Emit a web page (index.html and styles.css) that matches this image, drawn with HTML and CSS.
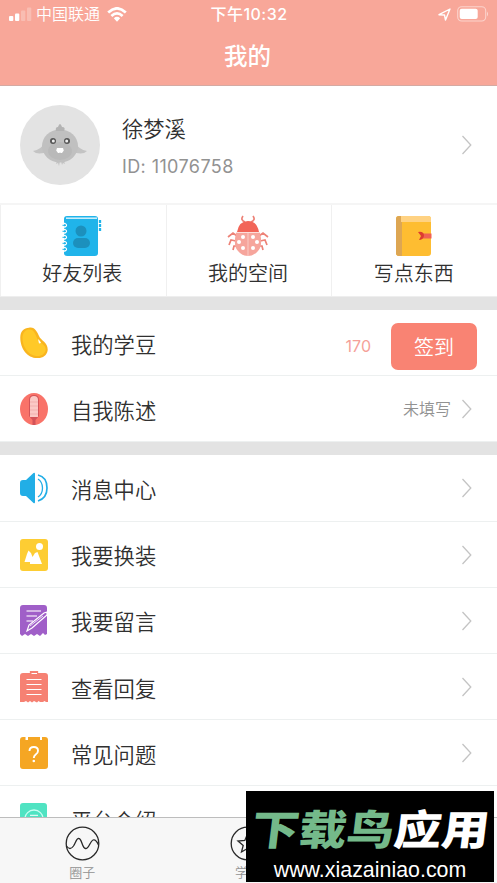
FILE: index.html
```html
<!DOCTYPE html>
<html lang="zh-CN">
<head>
<meta charset="utf-8">
<title>我的</title>
<link rel="stylesheet" href="styles.css">
</head>
<body>
<div class="app">
  <header class="header">
    <div class="status">
      <div class="carrier">
        <svg width="23" height="14" viewBox="0 0 23 14" fill="#fff"><rect x="0" y="9" width="4.300" height="5" rx="1"/><rect x="6" y="6.500" width="4.300" height="7.500" rx="1"/><g opacity=".25"><rect x="12" y="3.500" width="4.300" height="10.500" rx="1"/><rect x="18" y="0.500" width="4.300" height="13.500" rx="1"/></g></svg>
        <span class="carrier-name">中国联通</span>
        <svg width="20" height="15" viewBox="0 0 20 15" fill="none" stroke="#fff" stroke-width="2.700"><path d="M1.200 5.500Q10-2.800 18.800 5.500"/><path d="M4.400 9Q10 3.700 15.600 9"/><path d="M6.800 11.200Q10 8.300 13.200 11.200L10 14.700Z" fill="#fff" stroke="none"/></svg>
      </div>
      <span class="clock">下午10:32</span>
      <div class="power">
        <svg width="13" height="13" viewBox="0 0 13 13" fill="none" stroke="#fff" stroke-width="1.400" stroke-linejoin="round"><path d="M1 6.700L12 1L7.500 12L6.500 7Z"/></svg>
        <svg width="32" height="16" viewBox="0 0 32 16"><rect x=".7" y=".7" width="28" height="14.300" rx="4" fill="none" stroke="#fff" stroke-opacity=".5" stroke-width="1.100"/><rect x="2.700" y="2.700" width="18" height="10.300" rx="2" fill="#fff"/><path d="M30 5.500Q32 7.800 30 10.500Z" fill="#fff" opacity=".55"/></svg>
      </div>
    </div>
    <h1 class="title">我的</h1>
  </header>

  <main class="content">
    <section class="profile">
      <svg class="avatar" viewBox="0 0 80 80"><circle cx="40" cy="40" r="40" fill="#e3e3e3"/><g fill="#c3c3c3"><path d="M25 37Q21 45 13 46Q18 51 29 46M55 37Q59 45 67 46Q62 51 51 46"/><path d="M37 56l-1 3 2-1 1 3 1-5M41 56l1 4 1-2 2 1-1-3"/></g><ellipse cx="40" cy="41" rx="18" ry="16.500" fill="#c0c0c0"/><ellipse cx="40" cy="46" rx="12" ry="9" fill="#b9b9b9"/><path d="M36 26Q35 22 38 22Q40 16 42 22Q46 22 44 26Z" fill="#b3b3b3"/><circle cx="33" cy="36" r="3" fill="#555"/><circle cx="47" cy="36" r="3" fill="#555"/><circle cx="33.300" cy="36" r="1.500" fill="#eee"/><circle cx="46.700" cy="36" r="1.500" fill="#eee"/><path d="M37 43h6l.8 2.500-1.800 2.500h-1.500l-.5-1-.5 1H38l-1.800-2.500Z" fill="#fff"/></svg>
      <div class="person"><div class="name">徐梦溪</div><div class="uid">ID: 11076758</div></div>
      <svg class="chevron" viewBox="0 0 12 20"><path d="M1.500 1L9.800 10L1.500 19"/></svg>
    </section>

    <nav class="shortcuts">
      <a class="shortcut">
        <svg width="40" height="42" viewBox="0 0 40 42"><rect x="2" y="1" width="34" height="40" rx="3" fill="#20b4ea"/><path d="M4 3.200H35" stroke="#d4f1fb" stroke-width="1.500"/><g fill="#1c90bd"><circle cx="19" cy="16" r="5.500"/><rect x="11" y="23" width="17" height="10" rx="5"/></g><g fill="none" stroke="#fff" stroke-width="1.300"><path d="M1 8.500h2q3 1.500 0 3.500H1M1 14.500h2q3 1.500 0 3.500H1M1 20.500h2q3 1.500 0 3.500H1M1 26.500h2q3 1.500 0 3.500H1M1 32.500h2q3 1.500 0 3.500H1"/></g><path d="M.5 10.300H4M.5 16.300H4M.5 22.300H4M.5 28.300H4M.5 34.300H4" stroke="#20b4ea"/><path d="M38 5v12" stroke="#20b4ea" stroke-width="2.300" stroke-dasharray="3 1"/></svg>
        <span>好友列表</span>
      </a>
      <a class="shortcut">
        <svg width="42" height="42" viewBox="0 0 42 42"><g fill="none" stroke="#ed8277" stroke-width="1.700"><path d="M10 21L6 18L1 22M9 26L4 25L2 30M11 31L7 31L6 35M32 21L36 18L41 22M33 26L38 25L40 30M31 31L35 31L36 35M18 7Q13 5 16 1M24 7Q29 5 26 1"/></g><path d="M9 18H33Q36 31 31 36Q27 41 21 41Q15 41 11 36Q6 31 9 18Z" fill="#f6a59c"/><path d="M10 17Q12 6 21 6Q30 6 32 17Z" fill="#f26558"/><path d="M21 18V41M9 17.500H33" stroke="#fbd5d1" stroke-width=".8"/><g fill="#fff"><circle cx="16" cy="22" r="2"/><circle cx="12" cy="27" r="2"/><circle cx="16" cy="33" r="2"/><circle cx="26" cy="22" r="2"/><circle cx="30" cy="27" r="2"/><circle cx="26" cy="33" r="2"/></g></svg>
        <span>我的空间</span>
      </a>
      <a class="shortcut">
        <svg width="36" height="42" viewBox="0 0 36 42"><rect y="1" width="35" height="40" rx="3" fill="#febd31"/><path d="M3 1H6V41H3Q0 41 0 38V4Q0 1 3 1Z" fill="#dda653"/><path d="M5 1H32Q35 1 35 4V7H5Z" fill="#ffd282"/><path d="M26 18.500H35.500V23.500H26Z" fill="#f06153"/><path d="M22 17Q28 16 28 21Q27 25 23 25L25 21Z" fill="#dc3d2f"/></svg>
        <span>写点东西</span>
      </a>
    </nav>

    <section class="group">
      <div class="row">
        <svg class="icon" viewBox="0 0 28 32"><path d="M9 .7C15-.5 17 5 19 9C21 14 28 15 27.700 23C27 29 22 31.500 17 31C7 31 0 21 .3 10C.6 4 4 1 9 .7Z" fill="#f9b51f"/><path d="M9 2.500C14 2 15 7 17 11C19 16 26 17 25.700 23C24.500 28 20 29.500 16 29C8 28 2 19 2.500 10C3 5 6 2.500 9 2.500Z" fill="#ffc928"/><path d="M18 12l2 2 1 2-2 .500Z" fill="#fff"/></svg>
        <span class="label">我的学豆</span><span class="points">170</span><button class="checkin">签到</button>
      </div>
      <div class="row">
        <svg class="icon" viewBox="0 0 28 32"><ellipse cx="14" cy="16" rx="14" ry="16" fill="#f97369"/><path d="M9 23V7Q9 2 14 2Q19 2 19 7V23L15.500 27V32H12.500V27Z" fill="#d35358"/><path d="M10 24V7Q10 3 14 3Q18 3 18 7V24Z" fill="#fbc9c5"/><path d="M10 9H18M10 13H18M10 17H18M10 21H18" stroke="#f0aaa7" stroke-width=".8"/></svg>
        <span class="label">自我陈述</span><span class="state">未填写</span><svg class="chevron" viewBox="0 0 12 20"><path d="M1.500 1L9.800 10L1.500 19"/></svg>
      </div>
    </section>

    <section class="group">
      <div class="row">
        <svg class="icon" viewBox="0 0 28 32"><path d="M0 11Q0 8 3 8H6L13.500 1Q15 0 15 2V30Q15 32 13.500 31L6 24H3Q0 24 0 21Z" fill="#22aee6"/><path d="M18 7Q22.500 10 22.500 16Q22.500 22 18 25" fill="none" stroke="#22aee6" stroke-width="1.300"/><path d="M18 3Q27 5 27 16Q27 26 18 29" fill="none" stroke="#22aee6" stroke-width="1.700"/></svg>
        <span class="label">消息中心</span><svg class="chevron" viewBox="0 0 12 20"><path d="M1.500 1L9.800 10L1.500 19"/></svg>
      </div>
      <div class="row">
        <svg class="icon" viewBox="0 0 28 32"><rect width="28" height="32" rx="3" fill="#fdcd33"/><circle cx="19.500" cy="7.500" r="3.500" fill="#fff"/><path d="M4.500 23L7 15L8.500 11.500L11 14L12.500 18L15 14L17.500 13L19 17L22 25H10V23Z" fill="#fff"/></svg>
        <span class="label">我要换装</span><svg class="chevron" viewBox="0 0 12 20"><path d="M1.500 1L9.800 10L1.500 19"/></svg>
      </div>
      <div class="row">
        <svg class="icon" viewBox="0 0 28 32"><path d="M3 0H24Q27 0 27 3V29L25 30L23 28L20 31L17 29L14 31L11 29L8 31L5 29L2 31L0 29V3Q0 0 3 0Z" fill="#a05fc8"/><path d="M6.500 6H21M6.500 11H17M6.500 16H13" stroke="#e5d2f0" stroke-width="1.300"/><path d="M7 26L9 20L24 8L27 7V10L12 23Z" fill="#a05fc8" stroke="#fff" stroke-width="1.200"/><path d="M10 21L23 11" stroke="#fff" stroke-width=".8"/></svg>
        <span class="label">我要留言</span><svg class="chevron" viewBox="0 0 12 20"><path d="M1.500 1L9.800 10L1.500 19"/></svg>
      </div>
      <div class="row">
        <svg class="icon" viewBox="0 0 28 32"><path d="M3 2H25Q28 2 28 5V31H26L24.500 30L23 31H20L18.500 30L17 31.500L14 30L12 31.500L10 30L8 31.500L6 30L4 31H0V5Q0 2 3 2Z" fill="#f68173"/><path d="M10.500 .7H17.500V3.500H10.500Z" fill="#f68173" stroke="#f68173" stroke-width="1.300"/><path d="M11.500 2.500H17" stroke="#fff"/><path d="M6.500 8.500H21.500M6.500 13.500H21.500M6.500 18.500H21.500M6.500 23.500H21.500" stroke="#fff" stroke-width="1.200"/></svg>
        <span class="label">查看回复</span><svg class="chevron" viewBox="0 0 12 20"><path d="M1.500 1L9.800 10L1.500 19"/></svg>
      </div>
      <div class="row">
        <svg class="icon" viewBox="0 0 28 32"><path d="M3 0H5.500V3H8V0H20V3H22V0H25Q28 0 28 3V29Q28 32 25 32H3Q0 32 0 29V3Q0 0 3 0Z" fill="#f5a623"/><path d="M9.500 14Q9.500 10 13.800 10Q18 10 18 13.700Q18 16 15.700 17.500Q13.800 19 13.800 21" fill="none" stroke="#fff" stroke-width="1.900"/><circle cx="13.800" cy="24" r="1.300" fill="#fff"/></svg>
        <span class="label">常见问题</span><svg class="chevron" viewBox="0 0 12 20"><path d="M1.500 1L9.800 10L1.500 19"/></svg>
      </div>
      <div class="row">
        <svg class="icon" viewBox="0 0 28 32"><rect width="27" height="32" rx="3" fill="#50e3c2"/><circle cx="14" cy="16" r="9" fill="none" stroke="#c9fff3" stroke-width="1.300"/><path d="M10 12.300H18M8 14.500H20" stroke="#fff"/></svg>
        <span class="label">平台介绍</span><svg class="chevron" viewBox="0 0 12 20"><path d="M1.500 1L9.800 10L1.500 19"/></svg>
      </div>
    </section>
  </main>

  <footer class="tabs">
    <a class="tab"><svg width="35" height="35" viewBox="0 0 35 35"><circle cx="17.500" cy="17.500" r="16.300"/><path d="M1.500 20Q5 25 8.500 20C11 16 11.500 12 14 12.500C17 13 17 22 20.500 22.500C24 23 25 15 28 14Q31 13 33.500 19"/></svg><span>圈子</span></a>
    <a class="tab"><svg width="35" height="35" viewBox="0 0 35 35"><circle cx="17.500" cy="17.500" r="16.300"/><path d="M17.500 8L20.200 14.500L27 15L21.800 19.500L23.500 26L17.500 22.500L11.500 26L13.200 19.500L8 15L14.800 14.500Z"/></svg><span>学习</span></a>
    <a class="tab"></a>
  </footer>

  <aside class="stamp">
    <div class="brand"><span>下载鸟</span>应用</div>
    <div class="site">www.xiazainiao.com</div>
  </aside>
</div>
</body>
</html>
```
FILE: styles.css
```css
* { box-sizing: border-box; }
body { margin: 0; font-family: Inter, "Noto Sans CJK SC", sans-serif; font-weight: 350; color: #303030; background: #fff; }
svg { display: block; flex: none; }
.app { position: relative; width: 497px; height: 883px; overflow: hidden; display: flex; flex-direction: column; }
.header { flex: none; height: 86px; background: #f8a799; border-bottom: 1px solid #d4aaa3; color: #fff; }
.status { height: 28px; display: grid; grid-template-columns: 1fr auto 1fr; align-items: center; padding: 0 8px 0 9px; }
.carrier, .power { display: flex; align-items: center; }
.carrier { gap: 5px; }
.carrier-name { font-size: 16px; line-height: 28px; margin: 0 2px 0 -1px; }
.power { justify-content: flex-end; gap: 6px; }
.clock { font-size: 16px; line-height: 28px; font-weight: 450; letter-spacing: .5px; }
.title { margin: 11px 2px 0 0; font-size: 23.5px; line-height: 36px; font-weight: 500; text-align: center; }
.content { flex: 1; min-height: 0; overflow: hidden; }
.profile { height: 117px; display: flex; align-items: center; padding: 0 24px 0 20px; }
.avatar { width: 80px; height: 80px; }
.person { flex: 1; margin-left: 22px; padding-top: 1px; }
.name { font-size: 21.3px; line-height: 34px; }
.uid { color: #929292; font-size: 18px; font-weight: 400; line-height: 24px; margin-top: 9px; letter-spacing: .4px; }
.chevron { width: 12px; height: 20px; fill: none; stroke: #c4c4c4; stroke-width: 1.3; }
.shortcuts { height: 94px; display: grid; grid-template-columns: repeat(3, 1fr); border-top: 2px solid #f5f5f5; border-bottom: 1px solid #eee; }
.shortcut { display: flex; flex-direction: column; align-items: center; padding: 10px 2px 0 0; border-left: 1px solid #f0f0f0; font-size: 20px; line-height: 30px; }
.shortcut span { margin-top: 2px; }
.group { border-top: 13px solid #e3e3e3; }
.row { height: 66.2px; display: flex; align-items: center; padding: 1px 24px 0 20px; border-bottom: 1px solid #edf0f0; }
.icon { width: 28px; height: 32px; }
.label { flex: 1; margin-left: 23px; padding-top: 3px; font-size: 21.3px; line-height: 34px; }
.points { color: #f5a199; font-size: 16px; font-weight: 400; line-height: 24px; padding-top: 6px; margin-right: 20px; }
.checkin { width: 86px; height: 47px; margin: 6px -4px 0 0; padding: 0; border: 0; border-radius: 7px; background: #f98373; color: #fff; font: 350 20px/47px "Noto Sans CJK SC", sans-serif; }
.state { color: #929292; font-size: 16px; line-height: 24px; margin-right: 10px; }
.tabs { flex: none; height: 66px; background: #f7f7f7; border-top: 1px solid #bdbdbd; display: grid; grid-template-columns: repeat(3, 1fr); }
.tab { display: flex; flex-direction: column; align-items: center; padding: 8px 1px 0 0; color: #929292; font-size: 13px; line-height: 20px; }
.tab svg { fill: none; stroke: #292929; stroke-width: 1.3; }
.tab span { margin-top: 1px; }
.stamp { position: absolute; left: 246px; top: 791px; width: 248px; height: 91px; background: #000; color: #fff; text-align: center; }
.brand { height: 64px; font: 900 47.5px/64px "Noto Sans CJK SC", sans-serif; padding: 5px 0 0 3px; white-space: nowrap; transform: skewX(-7deg) scaleY(.87); }
.brand span { color: #74b98a; }
.site { font: 21.400px/22px "Liberation Sans", sans-serif; margin-top: 4px; }
```
